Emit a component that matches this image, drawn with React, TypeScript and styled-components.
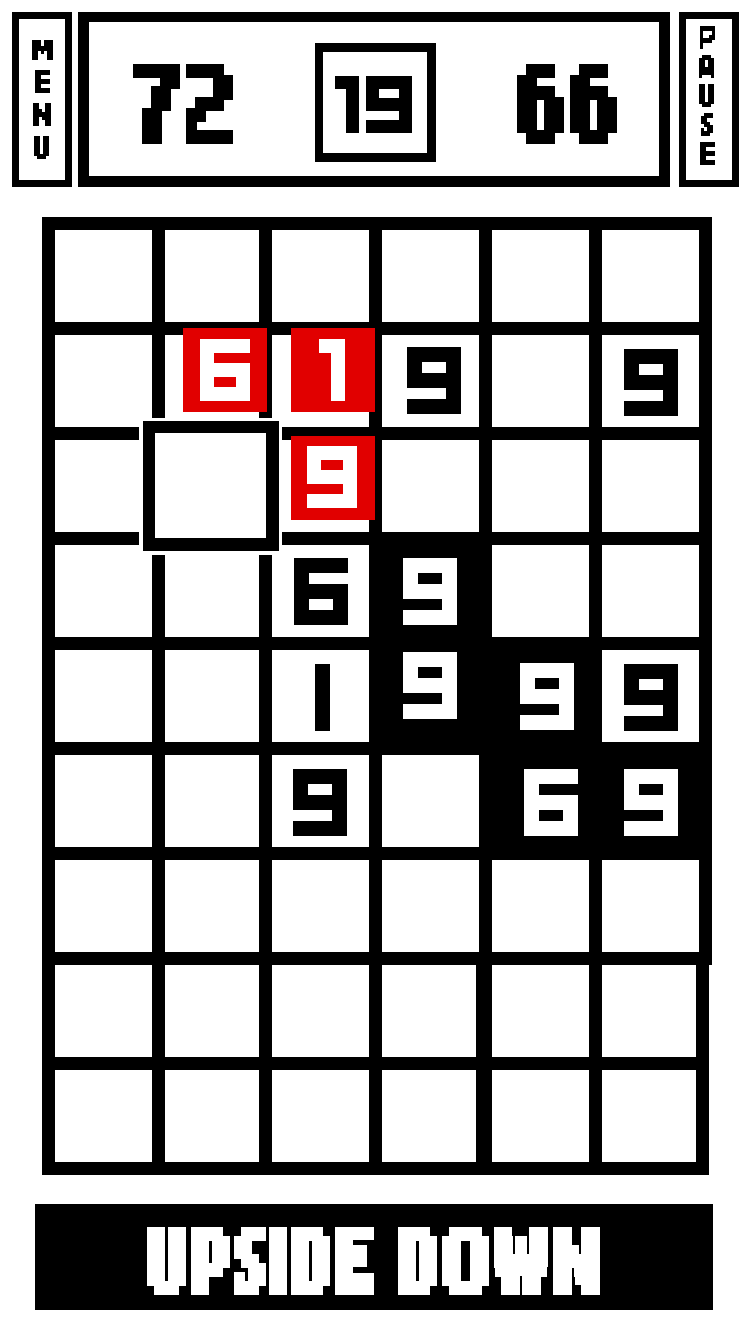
import React from "react";
import styled, { createGlobalStyle, css } from "styled-components";

const INK = "#000";
const PAPER = "#fff";
const RED = "#e10000";

const GlobalStyle = createGlobalStyle`
  * { box-sizing: border-box; }
  body { margin: 0; background: ${PAPER}; }
`;

/* ---------- pixel lettering ---------- */

/* A face describes the pixel raster of one lettering size:
   distance between pixel centres and the size of a drawn pixel. */
type Face = { id: string; sx: number; sy: number; kx: number; ky: number };

const FACES: Record<string, Face> = {
  tile: { id: "px-tile", sx: 13, sy: 13, kx: 15, ky: 15 },
  chip: { id: "px-chip", sx: 12, sy: 12, kx: 14, ky: 14 },
  timer: { id: "px-timer", sx: 11, sy: 11, kx: 13, ky: 13 },
  score: { id: "px-score", sx: 9, sy: 11, kx: 11, ky: 14 },
  title: { id: "px-title", sx: 7, sy: 9, kx: 11, ky: 14 },
  titleWide: { id: "px-title-wide", sx: 7, sy: 9, kx: 12, ky: 14 },
  label: { id: "px-label", sx: 3, sy: 3, kx: 3, ky: 5 },
};

/* How each character sits on the raster: its font, the number of pixels
   across and down, and where the first and last pixel fall in its ink box. */
type Fit = { font: string; weight: number; cols: number; rows: number; box: [number, number, number, number] };

const fit = (font: string, weight: number, cols: number, rows: number, ...box: [number, number, number, number]): Fit => ({
  font, weight, cols, rows, box,
});

const BLOCK: Record<string, Fit> = {
  "9": fit("DejaVu Sans", 700, 4, 5, 0.206, 0.706, 0.125, 0.915),
  "6": fit("DejaVu Sans", 700, 4, 5, 0.31, 0.714, 0.093, 0.868),
  "1": fit("Roboto", 700, 2, 5, 0.06, 0.75, 0.18, 0.82),
  "|": fit("Roboto", 700, 1, 5, 0.75, 0.75, 0.18, 0.82),
};

const PIXEL: Record<string, Fit> = {
  "7": fit("Noto Sans CJK SC", 700, 5, 7, 0.264, 0.822, 0.124, 0.771),
  "2": fit("Liberation Sans", 700, 5, 7, 0.358, 0.904, 0.076, 0.942),
  "6": fit("Roboto", 900, 5, 7, 0.101, 0.898, 0.159, 0.914),
  U: fit("Roboto", 900, 5, 7, 0.043, 0.944, 0.04, 0.871),
  P: fit("DejaVu Serif", 700, 5, 7, 0.192, 0.914, 0.05, 0.795),
  S: fit("Open Sans", 900, 4, 7, 0.07, 0.935, 0.111, 0.857),
  I: fit("Roboto", 900, 2, 7, 0.25, 0.75, 0.1, 0.9),
  D: fit("Open Sans", 900, 5, 7, 0.068, 0.897, 0.117, 0.851),
  E: fit("Noto Sans", 700, 5, 7, 0.036, 0.956, 0.182, 0.958),
  O: fit("DejaVu Sans Mono", 700, 6, 7, 0.104, 0.893, 0.116, 0.907),
  W: fit("Liberation Mono", 700, 7, 7, 0.097, 0.908, 0.208, 0.759),
  N: fit("Roboto", 700, 6, 7, 0.05, 0.964, 0.037, 0.973),
  A: fit("Open Sans", 900, 5, 7, 0.238, 0.745, 0.164, 0.798),
  M: fit("DejaVu Sans Mono", 700, 7, 7, 0.061, 0.936, -0.136, 0.97),
};

/* The smallest size needs its horizontal bars caught nearer their middle. */
const SMALL: Record<string, Fit> = {
  ...PIXEL,
  E: fit("Noto Sans", 700, 5, 7, 0.06, 0.93, 0.13, 0.95),
  P: fit("Liberation Sans Narrow", 700, 5, 7, 0.19, 0.92, 0.07, 0.79),
  A: fit("Open Sans", 900, 5, 7, 0.238, 0.745, 0.17, 0.87),
};

const PixelFilter = ({ face }: { face: Face }) => {
  const dot = (k: number) => (k % 2 ? 1 : 2);
  const start = (k: number) => (k - dot(k)) / 2;
  return (
    <filter id={face.id} x="0" y="0" width="1" height="1" primitiveUnits="userSpaceOnUse" colorInterpolationFilters="sRGB">
      <feComponentTransfer in="SourceGraphic" result="hard">
        <feFuncA type="discrete" tableValues="0 1" />
      </feComponentTransfer>
      <feFlood floodColor="#000" x={start(face.kx)} y={start(face.ky)} width={dot(face.kx)} height={dot(face.ky)} result="dot" />
      <feOffset in="dot" dx="0" dy="0" x="0" y="0" width={face.sx} height={face.sy} result="unit" />
      <feTile in="unit" result="raster" />
      <feComposite in="hard" in2="raster" operator="in" result="samples" />
      <feMorphology in="samples" operator="dilate" radius={`${start(face.kx)} ${start(face.ky)}`} />
    </filter>
  );
};

const Defs = styled.svg`
  position: absolute;
  width: 0;
  height: 0;
`;

const GlyphBox = styled.span<{ $w: number; $h: number; $filter: string; $color: string }>`
  display: block;
  flex: none;
  width: ${(p) => p.$w}px;
  height: ${(p) => p.$h}px;
  color: ${(p) => p.$color};
  filter: url(#${(p) => p.$filter});
`;

const GlyphWindow = styled.span`
  display: block;
  width: 100%;
  height: 100%;
  clip-path: inset(0);
`;

const Ink = styled.span<{ $font: string; $weight: number }>`
  display: block;
  width: 100px;
  height: 100px;
  font: ${(p) => p.$weight} 100px/100px "${(p) => p.$font}", "Liberation Sans", sans-serif;
  text-align: left;
  white-space: nowrap;
  transform-origin: 0 0;
`;

const measure = (() => {
  const ctx = document.createElement("canvas").getContext("2d")!;
  return (ch: string, f: Fit) => {
    ctx.font = `${f.weight} 100px "${f.font}"`;
    return ctx.measureText(ch);
  };
})();

type GlyphProps = { ch: string; face: Face; spec: Fit; color?: string };

const Glyph = ({ ch, face, spec, color = INK }: GlyphProps) => {
  const w = (spec.cols - 1) * face.sx + face.kx;
  const h = (spec.rows - 1) * face.sy + face.ky;
  const [a0, a1, b0, b1] = spec.box;
  const inkW = spec.cols > 1 ? (w - face.kx) / (a1 - a0) : face.kx * 3;
  const inkH = (h - face.ky) / (b1 - b0);
  const m = measure(ch, spec);
  const scaleX = inkW / (m.actualBoundingBoxLeft + m.actualBoundingBoxRight);
  const scaleY = inkH / (m.actualBoundingBoxAscent + m.actualBoundingBoxDescent);
  const baseline = (100 + m.fontBoundingBoxAscent - m.fontBoundingBoxDescent) / 2;
  const tx = face.kx / 2 - a0 * inkW + scaleX * m.actualBoundingBoxLeft;
  const ty = face.ky / 2 - b0 * inkH - scaleY * (baseline - m.actualBoundingBoxAscent);
  return (
    <GlyphBox $w={w} $h={h} $filter={face.id} $color={color}>
      <GlyphWindow>
        <Ink $font={spec.font} $weight={spec.weight} style={{ transform: `translate(${tx}px, ${ty}px) scale(${scaleX}, ${scaleY})` }}>
          {ch}
        </Ink>
      </GlyphWindow>
    </GlyphBox>
  );
};

/* ---------- page ---------- */

const Page = styled.main`
  width: 750px;
  height: 1334px;
  padding-top: 12px;
  overflow: hidden;
  background: ${PAPER};
`;

const Header = styled.header`
  display: flex;
  height: 175px;
  padding-left: 12px;
`;

const SideButton = styled.button<{ $top: number; $gap: number }>`
  display: flex;
  flex-direction: column;
  align-items: flex-start;
  justify-content: flex-start;
  gap: ${(p) => p.$gap}px;
  width: 60px;
  height: 175px;
  padding: ${(p) => p.$top}px 0 0;
  border: 7px solid ${INK};
  border-radius: 0;
  background: ${PAPER};
`;

const ScorePanel = styled.section`
  display: flex;
  justify-content: space-between;
  align-items: flex-start;
  width: 592px;
  margin: 0 9px 0 6px;
  padding: 0 42px 0 44px;
  border: 11px solid ${INK};
  border-top-width: 10px;
`;

const Score = styled.div`
  display: flex;
  gap: 6px;
  margin-top: 42px;
`;

const Timer = styled.div`
  display: flex;
  gap: 7px;
  width: 121px;
  height: 119px;
  margin-top: 21px;
  padding: 24px 0 0 12px;
  border: 9px solid ${INK};
  border-left-width: 8px;
`;

const Board = styled.section`
  position: relative;
  display: flex;
  flex-direction: column;
  align-items: flex-start;
  margin: 30px 0 0 42px;
`;

const BoardRow = styled.div<{ $first: boolean }>`
  display: flex;
  gap: 13px;
  padding: ${(p) => (p.$first ? 13 : 0)}px 13px 13px;
  background: ${INK};
`;

const Cell = styled.div<{ $w: number; $dark?: boolean; $tight?: boolean; $dx?: number; $dy?: number }>`
  width: ${(p) => p.$w}px;
  height: 92px;
  padding: ${(p) => p.$dy ?? 0}px 0 0 ${(p) => p.$dx ?? 0}px;
  background: ${(p) => (p.$dark ? INK : PAPER)};
  ${(p) => p.$tight && css`margin-right: 3px;`}
`;

const Chip = styled.div<{ $x: number; $y: number; $dx: number; $dy: number }>`
  position: absolute;
  left: ${(p) => p.$x}px;
  top: ${(p) => p.$y}px;
  width: 84px;
  height: 84px;
  padding: ${(p) => p.$dy}px 0 0 ${(p) => p.$dx}px;
  background: ${RED};
`;

const Cursor = styled.div`
  position: absolute;
  left: 97px;
  top: 201px;
  padding: 3px 3px 4px 4px;
  background: ${PAPER};
`;

const CursorFrame = styled.div`
  width: 136px;
  height: 130px;
  border: 13px solid ${INK};
  border-top-width: 12px;
  border-left-width: 12px;
`;

const Banner = styled.footer`
  display: flex;
  width: 678px;
  height: 106px;
  margin: 29px 0 0 35px;
  padding: 23px 0 0 112px;
  background: ${INK};
`;

const Title = styled.div`
  display: flex;
  align-items: flex-start;
`;

const Letter = styled.span<{ $before?: number; $after?: number }>`
  flex: none;
  margin-left: ${(p) => p.$before ?? 0}px;
  margin-right: ${(p) => p.$after ?? 0}px;
`;

/* ---------- data ---------- */

type CellData = { ch: string; dx: number; dy: number; dark?: boolean; bar?: boolean };

const CELLS: Record<string, CellData> = {
  "1-3": { ch: "9", dx: 25, dy: 12 },
  "1-5": { ch: "9", dx: 22, dy: 14 },
  "3-2": { ch: "6", dx: 22, dy: 13 },
  "3-3": { ch: "9", dx: 21, dy: 13, dark: true },
  "4-2": { ch: "1", dx: 43, dy: 14, bar: true },
  "4-3": { ch: "9", dx: 21, dy: 2, dark: true },
  "4-4": { ch: "9", dx: 28, dy: 13, dark: true },
  "4-5": { ch: "9", dx: 22, dy: 14 },
  "5-2": { ch: "9", dx: 21, dy: 14 },
  "5-4": { ch: "6", dx: 32, dy: 14, dark: true },
  "5-5": { ch: "9", dx: 22, dy: 14, dark: true },
};

const CHIPS = [
  { ch: "6", x: 141, y: 111, dx: 17, dy: 11 },
  { ch: "1", x: 249, y: 111, dx: 28, dy: 11 },
  { ch: "9", x: 249, y: 219, dx: 16, dy: 10 },
];

const WIDTHS = [97, 94, 97, 97, 97, 97];
const NARROW_WIDTHS = [97, 94, 97, 94, 97, 94];

const MENU: [string, number][] = [["M", 13], ["E", 16], ["N", 14], ["U", 15]];
const PAUSE: [string, number][] = [["P", 14], ["A", 13], ["U", 13], ["S", 15], ["E", 14]];

const TITLE: [string, number, Face][] = [
  ["U", 5, FACES.title],
  ["P", 4, FACES.title],
  ["S", 3, FACES.title],
  ["I", 4, FACES.title],
  ["D", 5, FACES.title],
  ["E", 24, FACES.title],
  ["D", 5, FACES.title],
  ["O", 5, FACES.titleWide],
  ["W", 5, FACES.titleWide],
  ["N", 0, FACES.titleWide],
];

const SideLabel = ({ letters }: { letters: [string, number][] }) => (
  <>
    {letters.map(([ch, before]) => (
      <Letter key={ch} $before={before}>
        <Glyph ch={ch} face={FACES.label} spec={SMALL[ch]} />
      </Letter>
    ))}
  </>
);

export default function App() {
  return (
    <Page>
      <GlobalStyle />
      <Defs aria-hidden="true">
        <defs>
          {Object.values(FACES).map((face) => <PixelFilter key={face.id} face={face} />)}
        </defs>
      </Defs>

      <Header>
        <SideButton $top={18} $gap={10}>
          <SideLabel letters={MENU} />
        </SideButton>
        <ScorePanel>
          <Score>
            <Glyph ch="7" face={FACES.score} spec={PIXEL["7"]} />
            <Glyph ch="2" face={FACES.score} spec={PIXEL["2"]} />
          </Score>
          <Timer>
            <Glyph ch="1" face={FACES.timer} spec={BLOCK["1"]} />
            <Glyph ch="9" face={FACES.timer} spec={BLOCK["9"]} />
          </Timer>
          <Score>
            <Glyph ch="6" face={FACES.score} spec={PIXEL["6"]} />
            <Glyph ch="6" face={FACES.score} spec={PIXEL["6"]} />
          </Score>
        </ScorePanel>
        <SideButton $top={7} $gap={6}>
          <SideLabel letters={PAUSE} />
        </SideButton>
      </Header>

      <Board>
        {Array.from({ length: 9 }, (_, r) => (
          <BoardRow key={r} $first={r === 0}>
            {(r > 6 ? NARROW_WIDTHS : WIDTHS).map((w, c) => {
              const cell = CELLS[`${r}-${c}`];
              return (
                <Cell key={c} $w={w} $dark={cell?.dark} $tight={r > 6 && c === 3} $dx={cell?.dx} $dy={cell?.dy}>
                  {cell && (
                    <Glyph ch={cell.ch} face={FACES.tile} spec={BLOCK[cell.bar ? "|" : cell.ch]} color={cell.dark ? PAPER : INK} />
                  )}
                </Cell>
              );
            })}
          </BoardRow>
        ))}
        <Cursor>
          <CursorFrame />
        </Cursor>
        {CHIPS.map((chip) => (
          <Chip key={chip.ch} $x={chip.x} $y={chip.y} $dx={chip.dx} $dy={chip.dy}>
            <Glyph ch={chip.ch} face={FACES.chip} spec={BLOCK[chip.ch]} color={PAPER} />
          </Chip>
        ))}
      </Board>

      <Banner>
        <Title>
          {TITLE.map(([ch, after, face], i) => (
            <Letter key={i} $after={after}>
              <Glyph ch={ch} face={face} spec={PIXEL[ch]} color={PAPER} />
            </Letter>
          ))}
        </Title>
      </Banner>
    </Page>
  );
}
